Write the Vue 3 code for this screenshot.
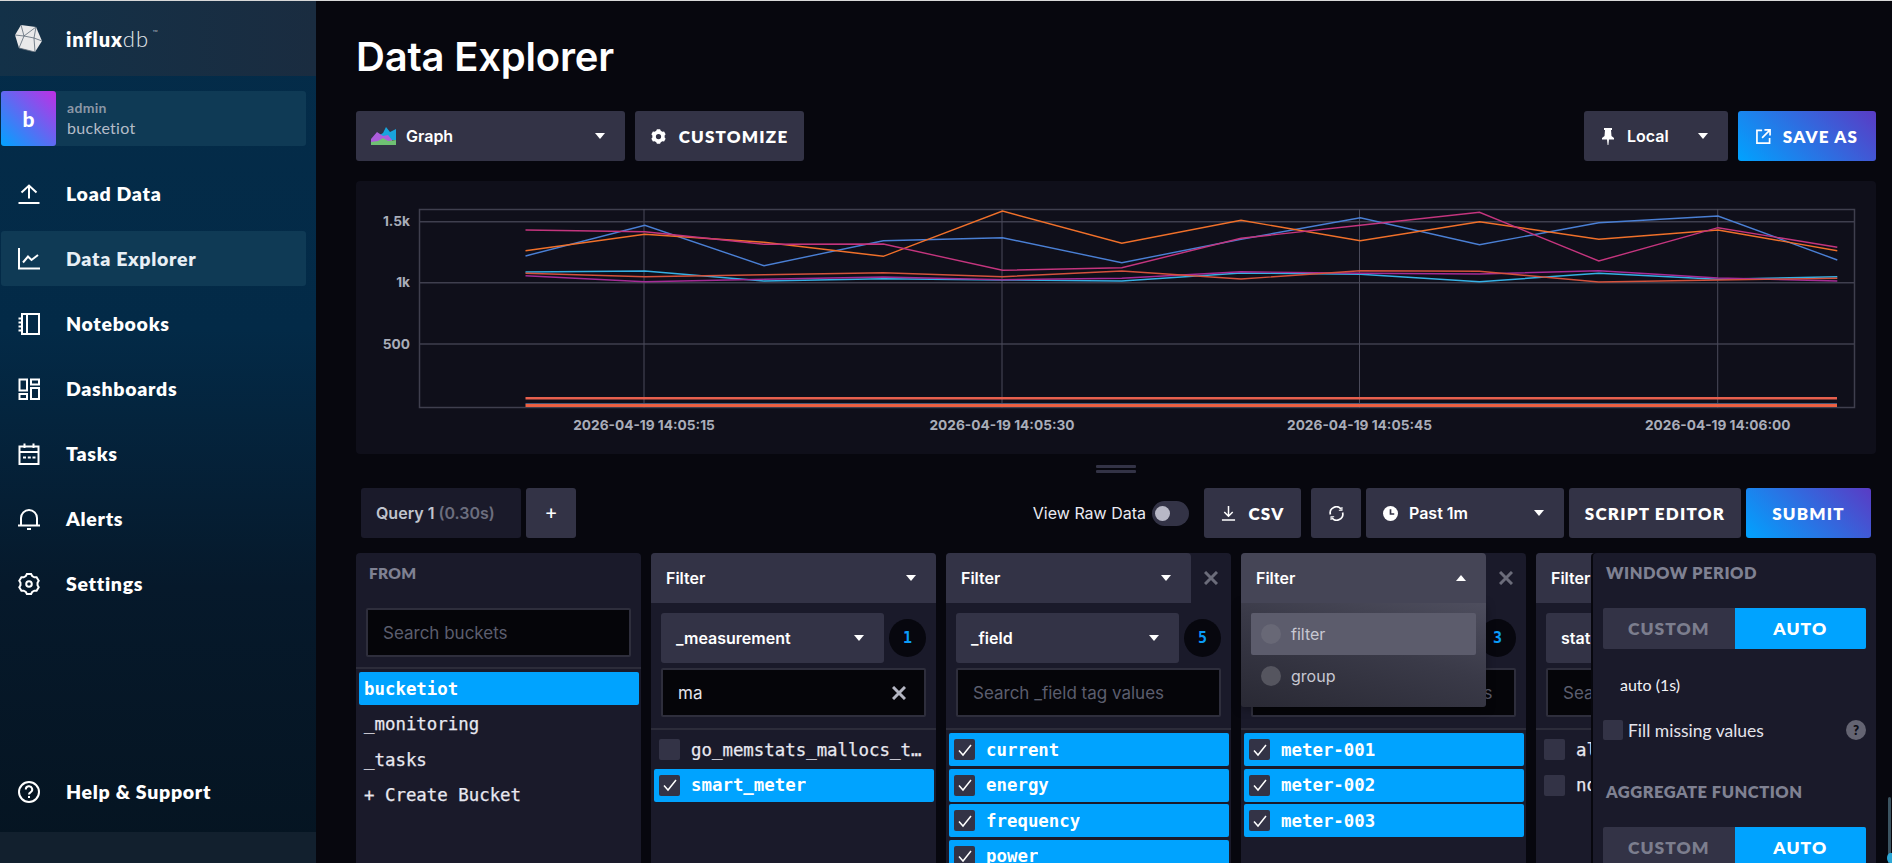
<script setup>
const nav = [
  { label: 'Load Data', icon: 'load' },
  { label: 'Data Explorer', icon: 'explorer', active: true },
  { label: 'Notebooks', icon: 'notebook' },
  { label: 'Dashboards', icon: 'dash' },
  { label: 'Tasks', icon: 'tasks' },
  { label: 'Alerts', icon: 'alerts' },
  { label: 'Settings', icon: 'settings' }
]

function gear(cx, cy, R, r, teeth) {
  const pts = []
  const step = (Math.PI * 2) / teeth
  for (let i = 0; i < teeth; i++) {
    const a = i * step - Math.PI / 2
    const w = step * 0.2
    const p = (rad, ang) => `${(cx + rad * Math.cos(ang)).toFixed(2)} ${(cy + rad * Math.sin(ang)).toFixed(2)}`
    pts.push(p(R, a - w), p(R, a + w), p(r, a + step / 2 - w * 0.7), p(r, a + step / 2 + w * 0.7))
  }
  return 'M' + pts.join('L') + 'Z'
}
const gearOutline = gear(11, 11, 10.2, 8.6, 6)
const gearFill = gear(8, 8, 8, 6.6, 6) + 'M8 5.2a2.8 2.8 0 1 0 0 5.6a2.8 2.8 0 1 0 0-5.6Z'

const X = i => (525.5 + 119.25 * i - 356).toFixed(1)
const Y = p => ((p - 3) / 3).toFixed(1)
const raw = [
  { c: '#4a7fd4', d: [228, 136, 257, 182, 173, 248, 178, 113, 194, 128, 108, 240] },
  { c: '#f0702a', d: [212, 163, 187, 229, 93, 190, 121, 182, 125, 178, 150, 212] },
  { c: '#c4357e', d: [150, 155, 193, 192, 271, 263, 175, 136, 97, 243, 143, 202] },
  { c: '#35b0e4', d: [276, 273, 303, 296, 300, 303, 279, 283, 305, 280, 298, 290] },
  { c: '#a52c96', d: [287, 305, 298, 291, 299, 295, 275, 280, 282, 272, 294, 303] },
  { c: '#d4523c', d: [280, 290, 284, 278, 290, 273, 297, 272, 274, 306, 300, 295] }
]
const series = raw.map(s => ({
  color: s.c,
  points: s.d.map((p, i) => `${X(i)},${Y(p)}`).join(' ')
}))
const hGrid = [
  { y: 40.7, label: '1.5k' },
  { y: 101.7, label: '1k' },
  { y: 163, label: '500' }
]
const vGrid = [
  { x: 288, label: '2026-04-19 14:05:15' },
  { x: 646, label: '2026-04-19 14:05:30' },
  { x: 1003.5, label: '2026-04-19 14:05:45' },
  { x: 1361.7, label: '2026-04-19 14:06:00' }
]

const buckets = [
  { label: 'bucketiot', on: true },
  { label: '_monitoring' },
  { label: '_tasks' },
  { label: '+ Create Bucket' }
]
const filters = [
  {
    key: '_measurement', count: 1, value: 'ma', placeholder: '',
    rows: [{ label: 'go_memstats_mallocs_total' }, { label: 'smart_meter', on: true }]
  },
  {
    key: '_field', count: 5, closable: true, placeholder: 'Search _field tag values',
    rows: [
      { label: 'current', on: true }, { label: 'energy', on: true },
      { label: 'frequency', on: true }, { label: 'power', on: true }
    ]
  },
  {
    key: 'device_id', count: 3, closable: true, open: true, placeholder: 'Search device_id tag values',
    rows: [{ label: 'meter-001', on: true }, { label: 'meter-002', on: true }, { label: 'meter-003', on: true }]
  },
  {
    key: 'status', count: 2, closable: true, placeholder: 'Search status tag values',
    rows: [{ label: 'alarm' }, { label: 'normal' }]
  }
]
</script>

<template>
  <div class="app">
    <aside class="side">
      <div class="side-head">
        <svg class="logo" viewBox="0 0 27 27" width="27" height="27">
          <polygon points="6,0 21,2 27,16 20,27 4,23 0,10" fill="#e9e9ea" />
          <path d="M6 0L9 11L21 2M9 11L19 13L21 2M19 13L20 27M9 11L4 23M0 10L9 11M19 13L27 16M4 23L20 27" stroke="#5b6876" stroke-width="0.8" fill="none" />
        </svg>
        <span class="brand"><b>influx</b><i>db</i><sup>™</sup></span>
      </div>
      <div class="org">
        <div class="org-avatar">b</div>
        <div class="org-text">
          <span class="org-user">admin</span>
          <span class="org-name">bucketiot</span>
        </div>
      </div>
      <nav class="nav">
        <a v-for="n in nav" :key="n.label" class="nav-item" :class="{ active: n.active }">
          <svg class="nav-icon" viewBox="0 0 22 22" fill="none" stroke="#fff" stroke-width="2">
            <path v-if="n.icon === 'load'" d="M11 15.5V2.5M3.5 9.5L11 2.5L18.5 9.5M0.5 20H21.5" />
            <path v-else-if="n.icon === 'explorer'" d="M1 0V20.500H22M5 14.500L10 8.500L13.500 12L20 7" />
            <path v-else-if="n.icon === 'notebook'" d="M4 1H21V21H4ZM9 1V21M0.500 5.500H4M0.500 9.500H4M0.500 13.500H4M0.500 17.500H4" />
            <path v-else-if="n.icon === 'dash'" d="M1.500 1.500H9V12.500H1.500ZM13 1.500H21V6.500H13ZM1.500 16H9V21H1.500ZM13 10H21V21H13Z" />
            <path v-else-if="n.icon === 'tasks'" d="M1.500 3.500H20.500V21H1.500ZM1.500 9H20.500M6.500 0.500V5M15.500 0.500V5M5 14.500H8M9.800 14.500H12.800M14.500 14.500H17.500" />
            <path v-else-if="n.icon === 'alerts'" d="M3 17V10A8 8 0 0 1 19 10V17M0 17.500H22M9 21H13" />
            <path v-else :d="gearOutline" />
            <circle v-if="n.icon === 'settings'" cx="11" cy="11" r="2.800" />
          </svg>
          <span>{{ n.label }}</span>
        </a>
        <a class="nav-item help">
          <svg class="nav-icon" viewBox="0 0 22 22" fill="none" stroke="#fff" stroke-width="2">
            <circle cx="11" cy="11" r="10" />
            <path d="M7.800 8.500A3.200 3.200 0 1 1 12.500 11.300C11.500 11.900 11 12.300 11 13.500M11 15V17" />
          </svg>
          <span>Help &amp; Support</span>
        </a>
      </nav>
      <div class="side-foot"></div>
    </aside>

    <main class="main">
      <header class="title-row">
        <h1>Data Explorer</h1>
      </header>

      <div class="tool-row">
        <button class="btn graph-btn">
          <svg viewBox="0 0 25 18" width="25" height="18">
            <polygon points="7,9 12,6 15,0 19,5 25,2 25,13 7,13" fill="#19a4dc" />
            <polygon points="0,12 6,5 12,9 17,8 21,13 21,18 0,18" fill="#ac5ddb" />
            <polygon points="0,18 0,15 7,14 12,11 17,14 25,13 25,18" fill="#6fc173" />
          </svg>
          <span>Graph</span>
          <i class="caret push"></i>
        </button>
        <button class="btn upper">
          <svg viewBox="0 0 16 16" width="15" height="15"><path :d="gearFill" fill="#fff" fill-rule="evenodd" /></svg>
          <span>CUSTOMIZE</span>
        </button>
        <div class="spacer"></div>
        <button class="btn local-btn">
          <svg viewBox="0 0 12 18" width="12" height="18" fill="#fff">
            <path d="M2 1H10V3H9L9.500 9L12 11V12.500H7L6.400 18H5.600L5 12.500H0V11L2.500 9L3 3H2Z" />
          </svg>
          <span>Local</span>
          <i class="caret push"></i>
        </button>
        <button class="btn upper primary save-btn">
          <svg viewBox="0 0 16 16" width="15" height="15" fill="none" stroke="#fff" stroke-width="1.800">
            <path d="M6.500 1.500H1V15H14.500V9.500M9 1H15V7M15 1L6.500 9.500" />
          </svg>
          <span>SAVE AS</span>
        </button>
      </div>

      <section class="chart">
        <svg class="chart-svg" viewBox="0 0 1520 273" width="1520" height="273">
          <rect x="63.500" y="28.500" width="1435" height="198" fill="none" stroke="#3f3f4e" stroke-width="1.500" />
          <line v-for="g in hGrid" :key="g.y" x1="63" x2="1499" :y1="g.y" :y2="g.y" stroke="#3f3f4e" stroke-width="1.500" />
          <line v-for="g in vGrid" :key="g.x" :x1="g.x" :x2="g.x" y1="28" y2="227" stroke="#4a4a5a" stroke-width="1" />
          <polyline v-for="(s, i) in series" :key="i" :points="s.points" fill="none" :stroke="s.color" stroke-width="1.400" />
          <rect x="169.500" y="216" width="1311.500" height="2.500" fill="#e8604e" />
          <rect x="169.500" y="222" width="1311.500" height="1.200" fill="#4a5a78" />
          <rect x="169.500" y="223" width="1311.500" height="3" fill="#ee6042" />
          <text v-for="g in hGrid" :key="g.label" class="axis" x="54" :y="g.y + 4.500" text-anchor="end">{{ g.label }}</text>
          <text v-for="g in vGrid" :key="g.label" class="axis" :x="g.x" y="248.500" text-anchor="middle">{{ g.label }}</text>
        </svg>
      </section>

      <div class="handle"><span></span><span></span></div>

      <div class="query-row">
        <div class="query-tab">Query 1 <em>(0.30s)</em></div>
        <button class="btn plus">+</button>
        <div class="spacer"></div>
        <span class="raw-label">View Raw Data</span>
        <span class="toggle"><i></i></span>
        <button class="btn upper csv-btn">
          <svg viewBox="0 0 16 16" width="15" height="15" fill="none" stroke="#fff" stroke-width="1.600">
            <path d="M8 0V10.500M3.500 6.500L8 11L12.500 6.500M1 15H15" />
          </svg>
          <span>CSV</span>
        </button>
        <button class="btn refresh">
          <svg viewBox="0 0 16 16" width="15" height="15" fill="none" stroke="#fff" stroke-width="1.800">
            <path d="M1.500 9A6.500 6.500 0 0 1 13 3.500M14.500 7A6.500 6.500 0 0 1 3 12.500" />
            <path d="M13.800 1V4.500H10.500M2.200 15V11.500H5.500" stroke-width="1.200" />
          </svg>
        </button>
        <button class="btn past-btn">
          <svg viewBox="0 0 16 16" width="15" height="15">
            <circle cx="8" cy="8" r="8" fill="#fff" />
            <path d="M8 3.500V8.500H12" stroke="#333346" stroke-width="1.800" fill="none" />
          </svg>
          <span>Past 1m</span>
          <i class="caret push"></i>
        </button>
        <button class="btn upper script-btn">SCRIPT EDITOR</button>
        <button class="btn upper primary submit-btn">SUBMIT</button>
      </div>

      <div class="builder">
        <section class="col">
          <h3 class="col-title">FROM</h3>
          <div class="from-search"><div class="input placeholder">Search buckets</div></div>
          <div class="rows">
            <div v-for="b in buckets" :key="b.label" class="row bucket" :class="{ on: b.on }">{{ b.label }}</div>
          </div>
        </section>

        <section v-for="f in filters" :key="f.key" class="col">
          <div class="col-head">
            <div class="head-btn" :class="{ open: f.open }">
              <span>Filter</span>
              <i class="caret push" :class="{ up: f.open }"></i>
            </div>
            <span v-if="f.closable" class="close">
              <svg viewBox="0 0 14 14" width="14" height="14" fill="none" stroke="#6b6c7a" stroke-width="3"><path d="M1 1L13 13M13 1L1 13" /></svg>
            </span>
          </div>
          <div v-if="f.open" class="drop">
            <div class="drop-item sel"><i></i>filter</div>
            <div class="drop-item"><i></i>group</div>
          </div>
          <div class="col-body">
            <div class="key-row">
              <div class="btn key-select">
                <span>{{ f.key }}</span>
                <i class="caret push"></i>
              </div>
              <span class="badge">{{ f.count }}</span>
            </div>
            <div class="input" :class="{ placeholder: !f.value }">
              <span class="ellip">{{ f.value || f.placeholder }}</span>
              <svg v-if="f.value" class="clear" viewBox="0 0 14 14" width="14" height="14" fill="none" stroke="#b4b6c2" stroke-width="3"><path d="M1 1L13 13M13 1L1 13" /></svg>
            </div>
          </div>
          <div class="rows">
            <div v-for="r in f.rows" :key="r.label" class="row tag" :class="{ on: r.on }">
              <span class="check">
                <svg v-if="r.on" viewBox="0 0 16 16" width="16" height="16" fill="none" stroke="#fff" stroke-width="1.500">
                  <path d="M2 8.500L6 13L14 3" />
                </svg>
              </span>
              <span class="ellip">{{ r.label }}</span>
            </div>
          </div>
        </section>

        <aside class="window">
          <h3 class="col-title wide">WINDOW PERIOD</h3>
          <div class="seg"><span>CUSTOM</span><span class="on">AUTO</span></div>
          <div class="auto-val">auto (1s)</div>
          <div class="fill-row">
            <span class="check"></span>
            <span class="fill-text">Fill missing values</span>
            <span class="qmark">?</span>
          </div>
          <h3 class="col-title wide agg">AGGREGATE FUNCTION</h3>
          <div class="seg"><span>CUSTOM</span><span class="on">AUTO</span></div>
        </aside>
      </div>
    </main>

    <div class="edge"><i></i></div>
  </div>
</template>

<style>
html, body { margin: 0; background: #07070e; overflow: hidden; }
</style>

<style scoped>
.app {
  position: relative;
  display: flex;
  width: 1892px;
  height: 863px;
  box-sizing: border-box;
  border-top: 1px solid #d8d8d8;
  overflow: hidden;
  background: #07070e;
  color: #fff;
  font-family: Inter, "Liberation Sans", sans-serif;
}
.side {
  width: 316px;
  flex: none;
  display: flex;
  flex-direction: column;
  background: linear-gradient(180deg, #042c49 0%, #032a47 38%, #06192b 68%, #051421 100%);
  font-family: Lato, "Liberation Sans", sans-serif;
}
.side-head {
  height: 75px;
  flex: none;
  display: flex;
  align-items: center;
  padding-left: 15px;
  gap: 24px;
  background: linear-gradient(90deg, #133148, #1a2c40);
}
.logo { margin-top: -1px; }
.brand { display: flex; align-items: baseline; font-size: 20px; letter-spacing: 0.9px; }
.brand b { font-weight: 800; }
.brand i { font-style: normal; font-weight: 300; font-size: 22px; letter-spacing: 1.2px; color: #e2e6ea; }
.brand sup { font-size: 7px; margin-left: 3px; color: #a8b0ba; align-self: flex-start; line-height: 14px; }
.org {
  margin: 15px 10px 20px 1px;
  height: 55px;
  flex: none;
  display: flex;
  background: #0f3a55;
  border-radius: 3px;
}
.org-avatar {
  width: 55px;
  display: flex;
  align-items: center;
  justify-content: center;
  font-size: 21px;
  font-weight: 900;
  border-radius: 3px;
  background: linear-gradient(225deg, #bf2fe5 0%, #00a3ff 100%);
}
.org-text { display: flex; flex-direction: column; padding: 8px 0 0 11px; }
.org-user { font-size: 14px; font-weight: 700; line-height: 18px; color: #8b97a6; letter-spacing: 0.3px; }
.org-name { font-size: 16px; line-height: 21px; color: #b4bcc8; letter-spacing: 0.3px; }
.nav { flex: 1; display: flex; flex-direction: column; gap: 10px; padding: 0 10px 13px 1px; }
.nav-item {
  height: 55px;
  flex: none;
  display: flex;
  align-items: center;
  padding-left: 17px;
  gap: 26px;
  font-size: 19.500px;
  font-weight: 800;
  border-radius: 3px;
  letter-spacing: 0.7px;
}
.nav-item.active { background: #0f3a55; color: #e8eff5; }
.nav-item.help { margin-top: auto; }
.nav-icon { width: 22px; height: 22px; flex: none; }
.side-foot { height: 31px; flex: none; background: #12202e; }

.main { flex: 1; min-width: 0; display: flex; flex-direction: column; padding: 0 16px 0 40px; }
.title-row { height: 110px; flex: none; display: flex; align-items: center; padding-top: 2px; box-sizing: border-box; }
h1 { margin: 0; font-size: 40px; font-weight: 600; line-height: 46px; letter-spacing: -0.2px; }
.tool-row { display: flex; gap: 10px; height: 50px; flex: none; }
.spacer { flex: 1; }
.btn {
  height: 50px;
  border: 0;
  margin: 0;
  box-sizing: border-box;
  display: flex;
  align-items: center;
  color: #fff;
  background: #333346;
  border-radius: 3px;
  font-family: Inter, "Liberation Sans", sans-serif;
  font-size: 16px;
  font-weight: 600;
  padding: 0;
}
.upper {
  justify-content: center;
  font-family: Lato, "Liberation Sans", sans-serif;
  font-weight: 800;
  font-size: 17px;
  letter-spacing: 1.2px;
}
.caret {
  width: 0;
  height: 0;
  border-left: 5.5px solid transparent;
  border-right: 5.5px solid transparent;
  border-top: 6px solid #fff;
  display: block;
}
.caret.up { border-top: 0; border-bottom: 6px solid #fff; }
.push { margin-left: auto; }
.graph-btn { width: 269px; padding: 0 20px 0 15px; gap: 10px; }
.tool-row .upper { gap: 13px; width: 169px; }
.local-btn { width: 144px; padding: 0 20px 0 18px; gap: 13px; }
.tool-row .save-btn { width: 138px; gap: 12px; }
.primary { background: linear-gradient(225deg, #5a3bc4 0%, #00a3ff 100%); }

.chart { height: 273px; margin-top: 20px; flex: none; background: #0f0f1a; border-radius: 4px; overflow: hidden; }
.chart-svg { display: block; }
.axis { font-family: Inter, "Liberation Sans", sans-serif; font-size: 13.700px; font-weight: 700; fill: #a9adb9; }
.handle { height: 34px; flex: none; display: flex; flex-direction: column; align-items: center; padding-top: 11px; gap: 2px; box-sizing: border-box; }
.handle span { width: 40px; height: 3px; background: #333346; border-radius: 1px; }

.query-row { display: flex; align-items: center; height: 50px; padding: 0 5px; flex: none; }
.query-tab {
  width: 160px;
  height: 50px;
  box-sizing: border-box;
  padding-left: 15px;
  display: flex;
  align-items: center;
  background: #1a1a2a;
  border-radius: 3px;
  font-size: 16px;
  font-weight: 600;
  color: #c0c4ce;
  white-space: pre;
}
.query-tab em { font-style: normal; color: #6c6e7e; }
.plus { width: 50px; margin-left: 5px; justify-content: center; font-size: 20px; font-weight: 400; padding-bottom: 3px; }
.raw-label { font-size: 16px; color: #eaeaf2; margin-right: 6px; }
.toggle { width: 37px; height: 25px; border-radius: 13px; background: #333346; display: flex; align-items: center; padding-left: 3px; box-sizing: border-box; }
.toggle i { width: 15px; height: 15px; border-radius: 50%; background: #b8b8c6; }
.csv-btn { width: 97px; margin-left: 15px; gap: 13px; font-size: 17px; }
.refresh { width: 50px; margin-left: 10px; justify-content: center; }
.past-btn { width: 198px; margin-left: 5px; padding: 0 20px 0 17px; gap: 11px; }
.script-btn { width: 172px; margin-left: 5px; }
.submit-btn { width: 125px; margin-left: 5px; }

.builder { position: relative; flex: none; height: 310px; margin-top: 15px; display: flex; gap: 10px; overflow: hidden; }
.col { position: relative; width: 285px; flex: none; background: #1a1a2a; border-radius: 4px 4px 0 0; }
.col-title { margin: 0; font-family: Lato, "Liberation Sans", sans-serif; font-size: 15.5px; font-weight: 800; letter-spacing: 0.3px; color: #7f8192; line-height: 20px; padding: 10px 0 0 13px; }
.col-title.wide { font-size: 16.5px; letter-spacing: 0.5px; padding-top: 10px; }
.from-search { padding: 25px 10px 0; height: 59px; }
.input {
  height: 49px;
  box-sizing: border-box;
  border: 2px solid #2e2e3c;
  border-radius: 2px;
  background: #050509;
  display: flex;
  align-items: center;
  padding: 0 14px 0 15px;
  font-size: 17px;
  color: #e4e4ec;
  position: relative;
}
.placeholder { color: #5c5e6e; }
.ellip { white-space: nowrap; overflow: hidden; text-overflow: ellipsis; }
.clear { margin-left: auto; margin-right: 4px; flex: none; }
.rows { border-top: 2px solid #2c2c3a; padding: 3px 2px 0 3px; }
.row {
  height: 33px;
  margin-bottom: 2.5px;
  display: flex;
  align-items: center;
  border-radius: 2px;
  font-family: "DejaVu Sans Mono", "Liberation Mono", monospace;
  font-size: 17.4px;
  color: #e8e8f0;
  -webkit-text-stroke: 0.25px currentColor;
}
.row.on { background: #00a3ff; color: #fff; font-weight: 700; -webkit-text-stroke: 0; }
.bucket { padding-left: 5px; }
.tag { padding: 0 4px 0 5px; gap: 11px; }
.check {
  width: 21px;
  height: 21px;
  flex: none;
  background: #333346;
  border-radius: 2px;
  display: flex;
  align-items: center;
  justify-content: center;
}
.col-head { display: flex; height: 50px; }
.head-btn {
  flex: 1;
  display: flex;
  align-items: center;
  padding: 0 20px 0 15px;
  background: #333346;
  font-size: 16px;
  font-weight: 600;
  border-radius: 4px 4px 0 0;
}
.head-btn.open { background: #454556; position: relative; z-index: 3; }
.close { width: 40px; display: flex; align-items: center; justify-content: center; }
.col-body { padding: 10px 10px 0; height: 125px; box-sizing: border-box; display: flex; flex-direction: column; gap: 5px; }
.key-row { display: flex; align-items: center; gap: 5px; }
.key-select { width: 223px; flex: none; padding: 0 20px 0 15px; }
.badge {
  width: 37px;
  height: 38px;
  border-radius: 50%;
  background: #07070e;
  color: #0a9cf8;
  display: flex;
  align-items: center;
  justify-content: center;
  font-weight: 800;
  font-size: 15px;
  font-family: "DejaVu Sans Mono", monospace;
}
.drop {
  position: absolute;
  left: 0;
  top: 50px;
  width: 245px;
  height: 104px;
  box-sizing: border-box;
  padding: 10px;
  z-index: 2;
  background: linear-gradient(195deg, #4e4e5e 0%, #3a3a48 45%, #292934 100%);
  border-radius: 0 0 3px 3px;
  box-shadow: 0 2px 10px rgba(0, 0, 0, 0.35);
}
.drop-item { height: 42px; display: flex; align-items: center; gap: 10px; padding-left: 10px; font-size: 16px; color: #c8c8d2; border-radius: 2px; }
.drop-item.sel { background: #5c5c6c; }
.drop-item i { width: 20px; height: 20px; border-radius: 50%; background: #686876; }
.drop-item:not(.sel) i { background: #55555f; }

.window {
  position: absolute;
  top: 0;
  right: 0;
  bottom: 0;
  width: 283px;
  background: #1a1a2a;
  border-radius: 4px 4px 0 0;
  box-shadow: -2px 0 0 #07070e;
  box-sizing: border-box;
  padding: 0 10px;
}
.window .col-title { padding-left: 3px; }
.seg {
  display: flex;
  height: 41px;
  margin-top: 25px;
  border-radius: 2px;
  overflow: hidden;
  background: #333346;
  font-family: Lato, "Liberation Sans", sans-serif;
  font-weight: 800;
  font-size: 17.5px;
  letter-spacing: 1px;
}
.seg span { flex: 1; display: flex; align-items: center; justify-content: center; color: #7c7e8e; }
.seg .on { background: #00a3ff; color: #fff; }
.auto-val { padding: 24px 0 0 17px; font-size: 16px; line-height: 24px; font-family: Lato, Inter, sans-serif; color: #f2f2f6; }
.fill-row { display: flex; align-items: center; margin-top: 23px; height: 20px; gap: 5px; font-family: Lato, Inter, sans-serif; font-size: 17.500px; color: #e4e4ec; }
.fill-row .check { width: 20px; height: 20px; }
.qmark { margin-left: auto; width: 20px; height: 20px; border-radius: 50%; background: #646472; color: #0d0d16; font-size: 13px; font-weight: 800; display: flex; align-items: center; justify-content: center; }
.window .agg { padding-top: 42px; }
.edge { position: absolute; right: 1px; top: 796px; bottom: 0; width: 3px; background: #3b5360; border-radius: 2px 2px 0 0; }
.edge i { position: absolute; left: -1px; bottom: 0; width: 7px; height: 10px; border-radius: 50% 0 0 50%; background: #2ba7d6; }
</style>
